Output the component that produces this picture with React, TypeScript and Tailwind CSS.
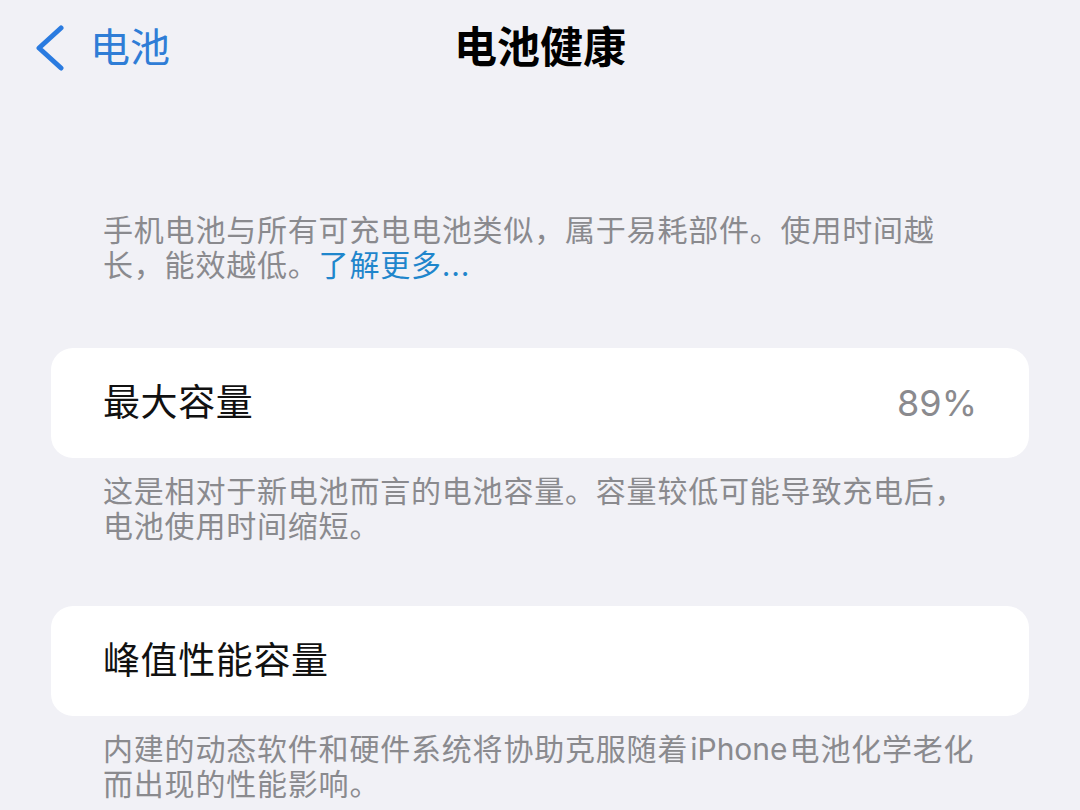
const FONT = 'font-["Inter","Noto_Sans_CJK_SC",sans-serif]';

const Note: React.FC<{ lines: React.ReactNode[] }> = ({ lines }) => (
  <p className="px-[52px] text-[30px] leading-[35px] tracking-[0.8px] text-[#8a8a8e]">
    {lines.map((l, i) => (
      <span key={i} className="block whitespace-nowrap">
        {l}
      </span>
    ))}
  </p>
);

const Row: React.FC<{ label: string; value?: string }> = ({ label, value }) => (
  <div className="flex h-[110px] items-center justify-between rounded-[22px] bg-white px-[52px]">
    <span className="text-[37px] tracking-[0.6px] text-[#111]">{label}</span>
    {value && <span className="text-[36px] text-[#8a8a8e]">{value}</span>}
  </div>
);

export default function App() {
  return (
    <div className={`min-h-[810px] w-[1080px] overflow-hidden bg-[#f1f1f6] ${FONT}`}>
      {/* Nav bar */}
      <header className="grid h-[95px] grid-cols-[1fr_auto_1fr] items-center px-[35px]">
        <div className="flex items-center gap-[25px] text-[#2f7dd6]">
          <svg width="30" height="46" viewBox="0 0 30 46" fill="none">
            <polyline
              points="26,3 4,23 26,43"
              stroke="#2a7be0"
              strokeWidth="5"
              strokeLinecap="round"
              strokeLinejoin="round"
            />
          </svg>
          <span className="text-[40px] leading-none">电池</span>
        </div>
        <h1 className="text-[43px] font-bold leading-none text-black">电池健康</h1>
        <div />
      </header>

      <main className="px-[51px]">
        <div className="mt-[118px]">
          <Note
            lines={[
              '手机电池与所有可充电电池类似，属于易耗部件。使用时间越',
              <>
                长，能效越低。<span className="text-[#1f86cc]">了解更多...</span>
              </>,
            ]}
          />
        </div>

        <div className="mt-[65px]">
          <Row label="最大容量" value="89%" />
        </div>
        <div className="mt-[16px]">
          <Note
            lines={['这是相对于新电池而言的电池容量。容量较低可能导致充电后，', '电池使用时间缩短。']}
          />
        </div>

        <div className="mt-[62px]">
          <Row label="峰值性能容量" />
        </div>
        <div className="mt-[16px]">
          <Note
            lines={[
              <>
                内建的动态软件和硬件系统将协助克服随着<span className="mx-[2px] tracking-normal">iPhone</span>电池化学老化
              </>,
              '而出现的性能影响。',
            ]}
          />
        </div>
      </main>
    </div>
  );
}
